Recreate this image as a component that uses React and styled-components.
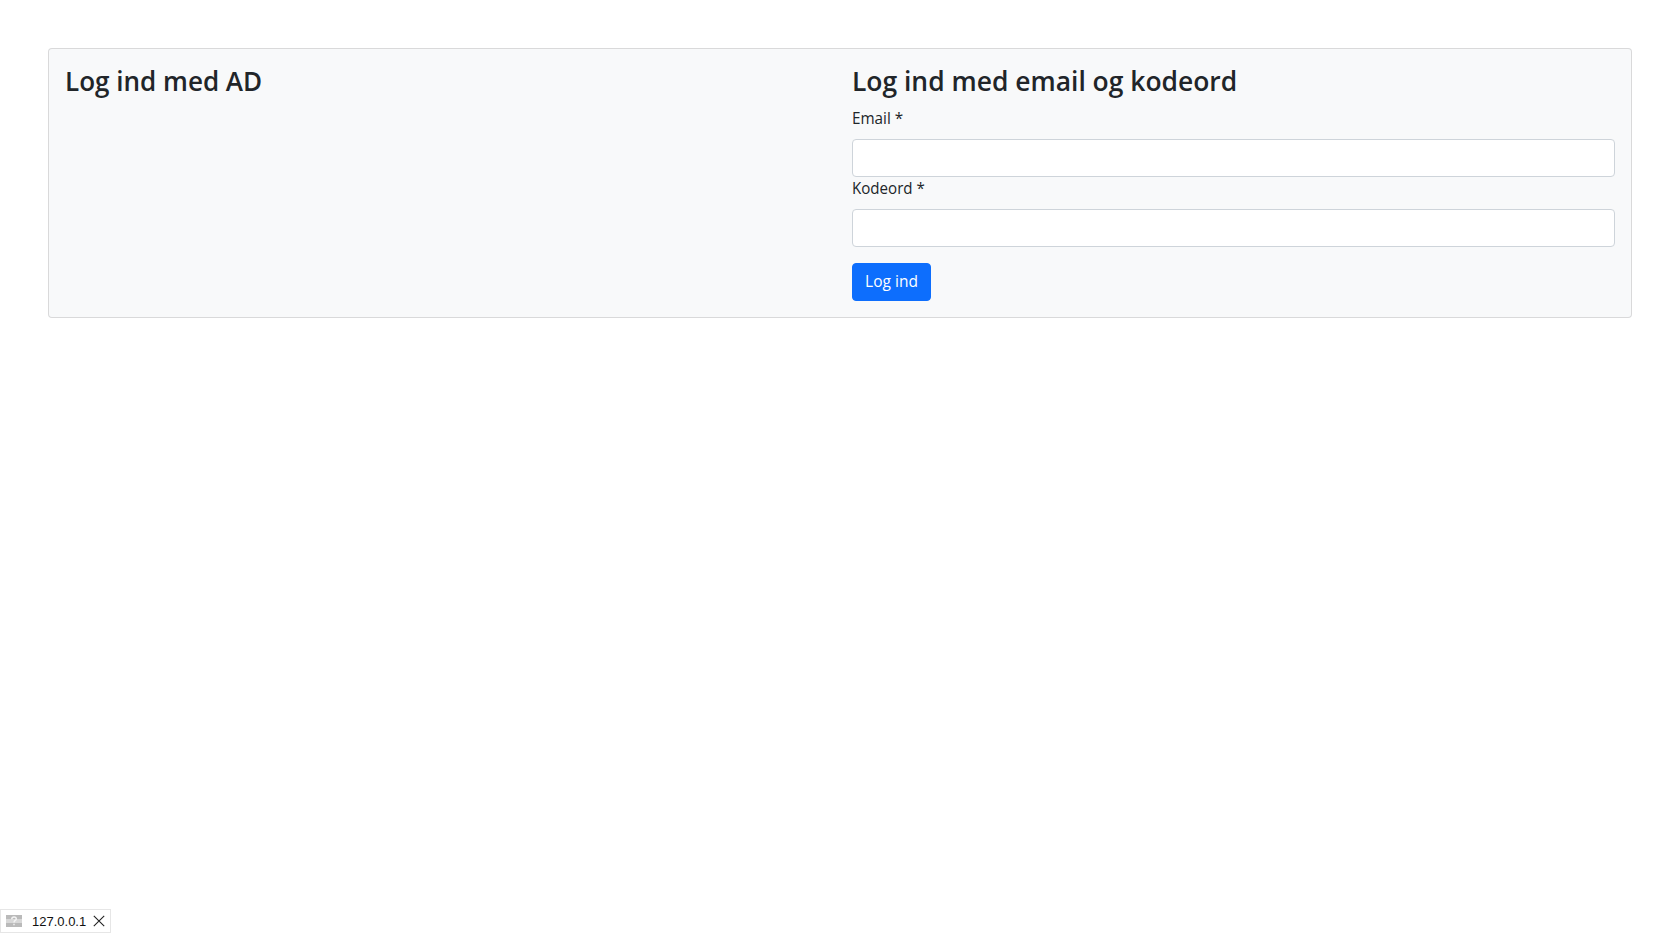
import React from "react";
import styled, { createGlobalStyle } from "styled-components";

const GlobalStyle = createGlobalStyle`
  *, *::before, *::after { box-sizing: border-box; }
  body {
    margin: 0;
    background: #fff;
    color: #212529;
    font-family: "Open Sans", "Noto Sans", sans-serif;
    font-size: 15.5px;
    line-height: 24px;
  }
`;

const Page = styled.div`
  display: flex;
  flex-direction: column;
  justify-content: space-between;
  height: 933px;
  padding-top: 48px;
`;

const Card = styled.main`
  display: grid;
  grid-template-columns: 1fr 1fr;
  column-gap: 24px;
  margin: 0 48px;
  padding: 16px;
  background: #f8f9fa;
  border: 1px solid rgba(0, 0, 0, 0.125);
  border-radius: 4px;
`;

const Title = styled.h2`
  height: 33.6px;
  margin: 0 0 8px;
  font-size: 27.5px;
  font-weight: 600;
  line-height: 33.6px;
  white-space: nowrap;
`;

const Text = styled.span`
  display: inline-block;
  transform: translateY(-1px) scaleX(${(p) => p.$stretch || 1});
  transform-origin: ${(p) => p.$origin || "left"} center;
  white-space: nowrap;
`;

const Label = styled.label`
  display: block;
  height: 24px;
  margin-bottom: 8px;
`;

const Input = styled.input`
  display: block;
  width: 100%;
  height: 38px;
  padding: 6px 12px;
  background: #fff;
  border: 1px solid #ced4da;
  border-radius: 4px;
  font: inherit;
  outline: 0;
`;

const Button = styled.button`
  display: block;
  width: 79px;
  height: 38px;
  margin-top: 16px;
  padding: 0;
  color: #fff;
  background: #0d6efd;
  border: 1px solid #0d6efd;
  border-radius: 4px;
  font: inherit;
`;

const HostBadge = styled.aside`
  display: flex;
  align-items: center;
  width: 111px;
  height: 24px;
  padding-left: 5px;
  background: #fff;
  border: 1px solid #e6e6e6;
  color: #111;
  font: 13px/22px "Liberation Sans", Arial, sans-serif;
`;

const Host = styled.span`
  width: 55px;
  margin: 0 6px 0 10px;
  padding-top: 1px;
`;

function FlagIcon() {
  return (
    <svg width="16" height="12" viewBox="0 0 16 12">
      <path fill="#bababa" d="M0 0h16v12H0z" />
      <path fill="#d8d8d8" d="M0 4h16v4H0z" />
      <path fill="none" stroke="#f4f4f4" strokeWidth="1.4" d="M5.7 4.2C5.8 2.7 6.6 2 8 2s2.3.8 2.3 1.9C10.3 5.4 8 5.5 8 7.4M8 8.7v1.5" />
    </svg>
  );
}

function CloseIcon() {
  return (
    <svg width="12" height="12" viewBox="0 0 12 12">
      <path stroke="#222" strokeWidth="1.1" d="M.8.8l10.4 10.4M11.2.8L.8 11.2" />
    </svg>
  );
}

export default function App() {
  return (
    <Page>
      <GlobalStyle />
      <Card>
        <section>
          <Title><Text $stretch={0.947}>Log ind med AD</Text></Title>
        </section>
        <form onSubmit={(e) => e.preventDefault()}>
          <Title><Text $stretch={0.961}>Log ind med email og kodeord</Text></Title>
          <Label htmlFor="email"><Text $stretch={0.985}>Email *</Text></Label>
          <Input id="email" type="email" />
          <Label htmlFor="password"><Text $stretch={0.975}>Kodeord *</Text></Label>
          <Input id="password" type="password" />
          <Button type="submit"><Text $origin="center">Log ind</Text></Button>
        </form>
      </Card>
      <HostBadge>
        <FlagIcon />
        <Host>127.0.0.1</Host>
        <CloseIcon />
      </HostBadge>
    </Page>
  );
}
